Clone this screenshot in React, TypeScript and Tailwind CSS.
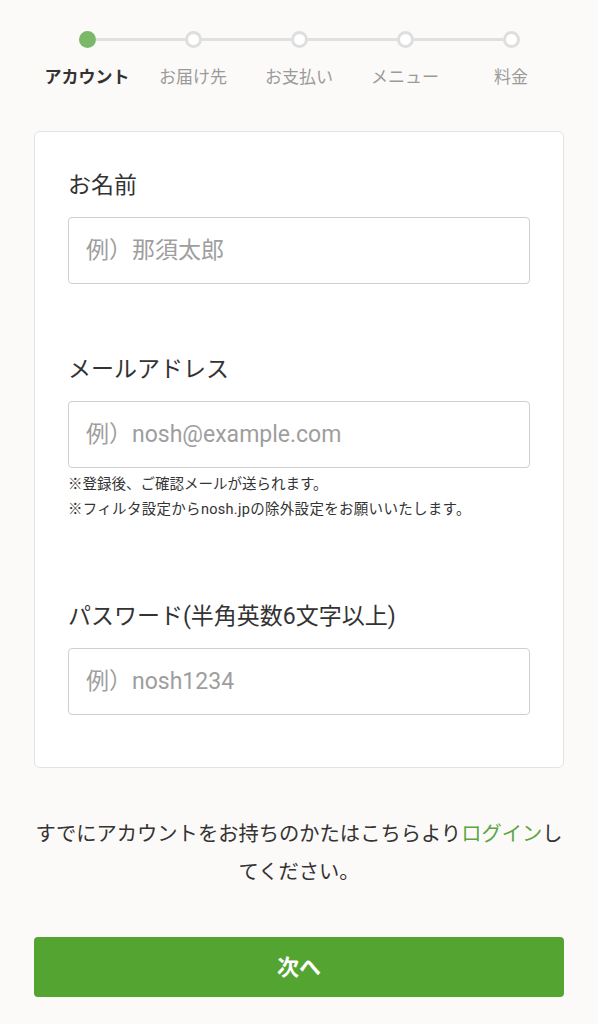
const steps = ['アカウント', 'お届け先', 'お支払い', 'メニュー', '料金']

function Stepper({ current }: { current: number }) {
  return (
    <div className="flex w-[530px] mx-auto pt-[31px]">
      {steps.map((label, i) => (
        <div key={label} className="flex w-[106px] flex-col items-center">
          <div className="flex w-full items-center">
            <div className={`h-[3px] flex-1 ${i === 0 ? 'bg-transparent' : 'bg-[#e0e0e0]'}`} />
            {i === current ? (
              <div className="h-[17px] w-[17px] rounded-full bg-[#7cb86a]" />
            ) : (
              <div className="box-border h-[17px] w-[17px] rounded-full border-[3px] border-[#dedede] bg-white" />
            )}
            <div className={`h-[3px] flex-1 ${i === steps.length - 1 ? 'bg-transparent' : 'bg-[#e0e0e0]'}`} />
          </div>
          <span
            className={`mt-[17px] text-[17px] leading-[24px] whitespace-nowrap ${
              i === current ? 'font-bold text-[#333]' : 'text-[#9a9a9a]'
            }`}
          >
            {label}
          </span>
        </div>
      ))}
    </div>
  )
}

function Field({ label, placeholder, type = 'text' }: { label: string; placeholder: string; type?: string }) {
  return (
    <div>
      <label className="block text-[23px] leading-[32px] text-[#333]">{label}</label>
      <input
        type={type}
        placeholder={placeholder}
        className="mt-[15px] box-border block h-[67px] w-full rounded-[4px] border border-[#cfcfcf] bg-white px-[17px] text-[23px] text-[#333] outline-none placeholder:text-[#9e9e9e]"
      />
    </div>
  )
}

export default function App() {
  return (
    <div
      className="min-h-[1024px] bg-[#fbfaf8] pb-10 text-[#333]"
      style={{ fontFamily: 'Roboto, "Noto Sans CJK JP", sans-serif' }}
    >
      <Stepper current={0} />

      <div className="mx-auto mt-[42px] box-border w-[530px] rounded-[6px] border border-[#e2e2e2] bg-white px-[33px] pt-[38px] pb-[52px]">
        <Field label="お名前" placeholder="例）那須太郎" />

        <div className="mt-[70px]">
          <Field label="メールアドレス" placeholder="例）nosh@example.com" type="email" />
          <div className="mt-[4px] text-[14.5px] leading-[25px] text-[#333]">
            <p>※登録後、ご確認メールが送られます。</p>
            <p className="tracking-[0.3px]">※フィルタ設定からnosh.jpの除外設定をお願いいたします。</p>
          </div>
        </div>

        <div className="mt-[79px]">
          <Field label="パスワード(半角英数6文字以上)" placeholder="例）nosh1234" type="password" />
        </div>
      </div>

      <p className="mx-auto mt-[47px] w-[530px] text-center text-[20.3px] leading-[38px] text-[#333]">
        すでにアカウントをお持ちのかたはこちらより
        <a href="#" className="text-[#5da544]">
          ログイン
        </a>
        してください。
      </p>

      <button className="mx-auto mt-[46px] block h-[60px] w-[530px] rounded-[4px] bg-[#54a432] text-[22px] font-bold text-white">
        次へ
      </button>
    </div>
  )
}
